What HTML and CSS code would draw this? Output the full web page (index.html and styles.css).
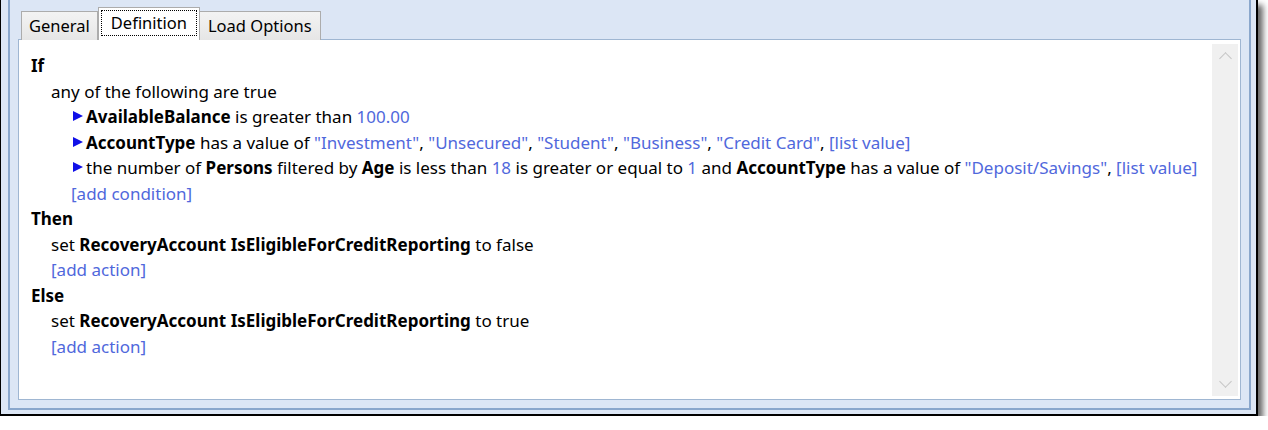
FILE: index.html
```html
<!DOCTYPE html>
<html>
<head>
    <title>Rule Definition</title>
    <link rel="stylesheet" href="styles.css">
</head>
<body>
    <div class="window">
        <div class="frame">
            <div class="tabs">
                <div class="tab">General</div>
                <div class="tab active"><span class="focus">Definition</span></div>
                <div class="tab">Load Options</div>
            </div>
            <div class="panel">
                <div class="rule">
                    <div class="line kw">If</div>
                    <div class="line lvl1">any of the following are true</div>
                    <div class="line lvl2"><span class="arrow"></span><b>AvailableBalance</b> is greater than <span class="val">100.00</span></div>
                    <div class="line lvl2"><span class="arrow"></span><b>AccountType</b> has a value of <span class="val">"Investment"</span>, <span class="val">"Unsecured"</span>, <span class="val">"Student"</span>, <span class="val">"Business"</span>, <span class="val">"Credit Card"</span>, <span class="val">[list value]</span></div>
                    <div class="line lvl2"><span class="arrow"></span>the number of <b>Persons</b> filtered by <b>Age</b> is less than <span class="val">18</span> is greater or equal to <span class="val">1</span> and <b>AccountType</b> has a value of <span class="val">"Deposit/Savings"</span>, <span class="val">[list value]</span></div>
                    <div class="line lvl2b"><span class="val">[add condition]</span></div>
                    <div class="line kw">Then</div>
                    <div class="line lvl1">set <b>RecoveryAccount IsEligibleForCreditReporting</b> to false</div>
                    <div class="line lvl1"><span class="val">[add action]</span></div>
                    <div class="line kw">Else</div>
                    <div class="line lvl1">set <b>RecoveryAccount IsEligibleForCreditReporting</b> to true</div>
                    <div class="line lvl1"><span class="val">[add action]</span></div>
                </div>
                <div class="scrollbar">
                    <div class="sb-btn"><span class="chev up"></span></div>
                    <div class="sb-track"></div>
                    <div class="sb-btn"><span class="chev down"></span></div>
                </div>
            </div>
        </div>
    </div>
</body>
</html>
```

FILE: styles.css
```css
body {
    margin: 0;
    background: #fff;
    font-family: 'Noto Sans', 'Open Sans', sans-serif;
    font-size: 17px;
    color: #000;
}

.window {
    width: 1243px;
    height: 414px;
    background: #dce6f5;
    border-left: 1px solid #000;
    border-right: 2px solid #000;
    border-bottom: 2px solid #000;
    padding: 0 5px 0 7px;
    box-sizing: content-box;
    box-shadow: 5px 5px 6px rgba(0, 0, 0, 0.6);
}

.frame {
    height: 410px;
    border-left: 2px solid #8aa7cc;
    border-right: 2px solid #8aa7cc;
    border-bottom: 2px solid #8aa7cc;
    padding: 7px 8px 8px 8px;
    box-sizing: border-box;
    display: flex;
    flex-direction: column;
}

.tabs {
    display: flex;
    align-items: flex-end;
    padding-left: 3px;
    height: 33px;
    position: relative;
    z-index: 1;
    margin-bottom: -1px;
    font-size: 16.5px;
}

.tab {
    height: 29px;
    box-sizing: border-box;
    padding: 0 7px;
    line-height: 28px;
    border: 1px solid #acacac;
    border-bottom: none;
    background: linear-gradient(#f3f3f3, #e6e6e6);
    color: #000;
}

.tab:last-child {
    padding: 0 8px;
}

.tab.active {
    height: 33px;
    background: #fff;
    padding: 2px 2px 0 2px;
    margin: 0 -1px 0 0;
    line-height: 24px;
}

.focus {
    display: block;
    border: 1px dotted #000;
    padding: 0 9px;
    height: 26px;
    box-sizing: border-box;
    line-height: 24px;
}

.panel {
    flex: 1;
    background: #fff;
    border: 1px solid #9fb6d2;
    display: flex;
    padding: 4px 2px 3px 12px;
}

.rule {
    flex: 1;
    padding-top: 9px;
    line-height: 25.5px;
    white-space: nowrap;
}

.kw {
    font-weight: 700;
}

.lvl1 {
    padding-left: 20px;
}

.lvl2 {
    padding-left: 42px;
}

.lvl2b {
    padding-left: 40px;
}

.val {
    color: #5068dc;
}

.arrow {
    display: inline-block;
    width: 0;
    height: 0;
    border-top: 5px solid transparent;
    border-bottom: 5px solid transparent;
    border-left: 10px solid #1010e8;
    margin-right: 3px;
    vertical-align: 2px;
}

.scrollbar {
    width: 26px;
    background: #f0f0f0;
    display: flex;
    flex-direction: column;
}

.sb-btn {
    height: 24px;
    display: flex;
    align-items: center;
    justify-content: center;
}

.sb-track {
    flex: 1;
}

.chev {
    width: 8px;
    height: 8px;
    border-left: 1px solid #c4c4c4;
    border-top: 1px solid #c4c4c4;
}

.chev.up {
    transform: rotate(45deg);
    margin-top: 5px;
}

.chev.down {
    transform: rotate(225deg);
    margin-bottom: 5px;
}
```
